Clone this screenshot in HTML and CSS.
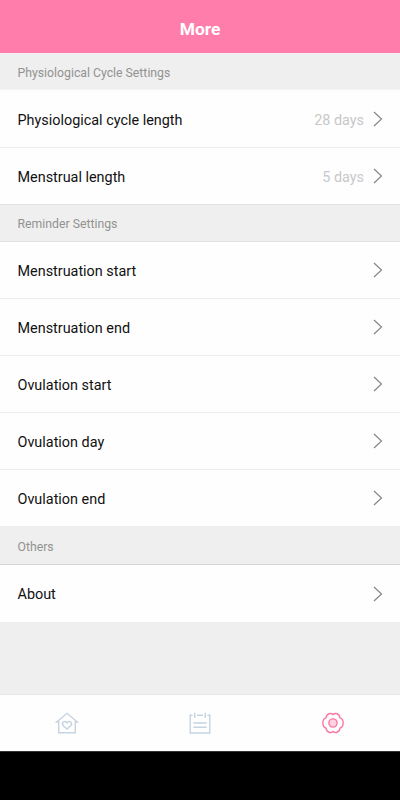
FILE: index.html
```html
<!DOCTYPE html>
<html lang="en">
<head>
    <meta charset="UTF-8">
    <meta name="viewport" content="width=device-width, initial-scale=1.0">
    <title>More</title>
    <link rel="stylesheet" href="styles.css">
</head>
<body>

    <svg class="defs">
        <symbol id="chevron" viewBox="0 0 10 16"><path d="M1 1 L8.5 8 L1 15"/></symbol>
    </svg>

    <header class="header"><h1>More</h1></header>

    <main class="settings">
        <h2 class="section first">Physiological Cycle Settings</h2>
        <div class="row tall"><span>Physiological cycle length</span><span class="value">28 days</span><svg class="chevron"><use href="#chevron"/></svg></div>
        <div class="row group-end"><span>Menstrual length</span><span class="value">5 days</span><svg class="chevron"><use href="#chevron"/></svg></div>

        <h2 class="section">Reminder Settings</h2>
        <div class="row"><span>Menstruation start</span><svg class="chevron"><use href="#chevron"/></svg></div>
        <div class="row"><span>Menstruation end</span><svg class="chevron"><use href="#chevron"/></svg></div>
        <div class="row"><span>Ovulation start</span><svg class="chevron"><use href="#chevron"/></svg></div>
        <div class="row"><span>Ovulation day</span><svg class="chevron"><use href="#chevron"/></svg></div>
        <div class="row last"><span>Ovulation end</span><svg class="chevron"><use href="#chevron"/></svg></div>

        <h2 class="section others">Others</h2>
        <div class="row about"><span>About</span><svg class="chevron"><use href="#chevron"/></svg></div>
    </main>

    <nav class="tabs">
        <a class="tab">
            <svg viewBox="0 0 24 24">
                <path d="M3.7 11 H1.8 L12 2.3 L22.2 11 H20.3 V21.8 H3.7 Z"/>
                <path d="M12 18 L8.3 14.8 C5.9 11.8 9.5 8.8 12 11.8 C14.5 8.8 18.1 11.8 15.7 14.8 Z"/>
            </svg>
        </a>
        <a class="tab">
            <svg viewBox="0 0 24 24">
                <path d="M4.5 4.2 H2.2 V22 H21.8 V4.2 H19.5 M9 4.2 H15 M6.7 1.7 V6.8 M17.3 1.7 V6.8 M5.3 12 H18.7 M5.3 16.3 H18.7"/>
            </svg>
        </a>
        <a class="tab active">
            <svg viewBox="0 0 24 24">
                <path d="M12 3.6 C14 1.6 18.4 2.2 19 6.9 C23.2 8.2 23.2 15.8 19 17.1 C18.4 21.8 14 22.4 12 20.4 C10 22.4 5.6 21.8 5 17.1 C0.8 15.8 0.8 8.2 5 6.9 C5.6 2.2 10 1.6 12 3.6 Z"/>
                <circle cx="12" cy="12" r="4.1"/>
            </svg>
        </a>
    </nav>

</body>
</html>
```
FILE: styles.css
```css
* { box-sizing: border-box; }
body { margin: 0; height: 800px; background-color: #000; font-family: Roboto, sans-serif; }
.defs { display: none; }

.header { height: 53px; padding-top: 4px; background-color: #ff7daa; display: flex; align-items: center; justify-content: center; }
.header h1 { margin: 0; color: #fff; font-size: 17.4px; font-weight: 700; }

.settings { height: 641px; background-color: #efefef; }
.section { margin: 0; height: 37px; padding: 2px 0 0 17.5px; display: flex; align-items: center; color: #929292; font-size: 12.25px; font-weight: 400; border-bottom: 1px solid #e2e2e2; }
.section.first { border-bottom-color: #f3f3f3; padding-top: 3px; }
.section.others { height: 39px; padding-top: 3px; border-bottom-color: #d4d4d4; }

.row { height: 57px; padding: 1px 17px 0 17.5px; display: flex; align-items: center; background-color: #fefefe; color: #111; font-size: 14.4px; border-bottom: 1px solid #ebebeb; }
.row span { padding-top: 2px; }
.row.tall { height: 58px; padding-top: 2px; }
.row.group-end { padding-top: 0; border-bottom-color: #e2e2e2; }
.row.last { height: 56px; border-bottom: none; }
.row.about { border-bottom: none; }
.row.about span { padding-top: 1px; }
.value { margin-left: auto; color: #c8c8c8; }
.chevron { width: 10px; height: 16px; margin: 0 0 1px auto; fill: none; stroke: #858585; stroke-width: 1.2; }
.value + .chevron { margin-left: 9px; }

.tabs { height: 58px; display: flex; background-color: #fefefe; border-top: 1px solid #e6e6e6; border-bottom: 1px solid #333; }
.tab { flex: 1; display: flex; align-items: center; justify-content: center; }
.tab svg { width: 24px; height: 24px; fill: none; stroke: #c6d3e0; stroke-width: 1.4; }
.tab.active svg { stroke: #fb76a6; }
.tab.active circle { fill: #ffd0e0; }
```
